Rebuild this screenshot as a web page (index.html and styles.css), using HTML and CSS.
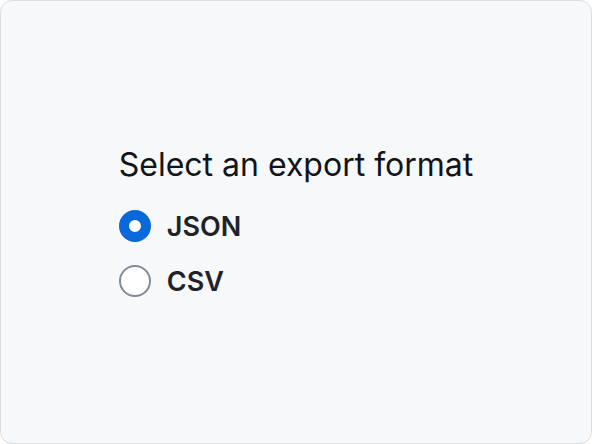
FILE: index.html
```html
<!DOCTYPE html>
<html lang="en">
<head>
    <meta charset="UTF-8">
    <title>Export format</title>
    <link rel="stylesheet" href="styles.css">
</head>
<body>
    <div class="card">
        <div class="group" role="radiogroup" aria-labelledby="formatTitle">
            <div class="title" id="formatTitle">Select an export format</div>
            <label class="option">
                <input type="radio" name="format" value="json" checked>
                <span class="dot"></span>
                <span class="label">JSON</span>
            </label>
            <label class="option">
                <input type="radio" name="format" value="csv">
                <span class="dot"></span>
                <span class="label">CSV</span>
            </label>
        </div>
    </div>
</body>
</html>
```

FILE: styles.css
```css
html, body {
    margin: 0;
    height: 100%;
}

body {
    font-family: Inter, 'Noto Sans', sans-serif;
    color: #1f2328;
    background: #ffffff;
}

.card {
    box-sizing: border-box;
    height: 100%;
    background: #f6f8fa;
    border: 1px solid #d8dee4;
    border-radius: 12px;
    display: flex;
    align-items: center;
    justify-content: center;
}

.group {
    display: flex;
    flex-direction: column;
    gap: 21px;
}

.title {
    font-size: 32px;
    line-height: 38px;
    margin-bottom: 4px;
    color: #111418;
}

.option {
    display: flex;
    align-items: center;
    gap: 16px;
    height: 34px;
    cursor: pointer;
}

.option input {
    display: none;
}

.dot {
    box-sizing: border-box;
    width: 32px;
    height: 32px;
    border-radius: 50%;
    border: 2px solid #818b98;
    background: #ffffff;
}

.option input:checked + .dot {
    border: 10px solid #0969da;
}

.label {
    font-size: 27px;
    font-weight: 600;
}
```
